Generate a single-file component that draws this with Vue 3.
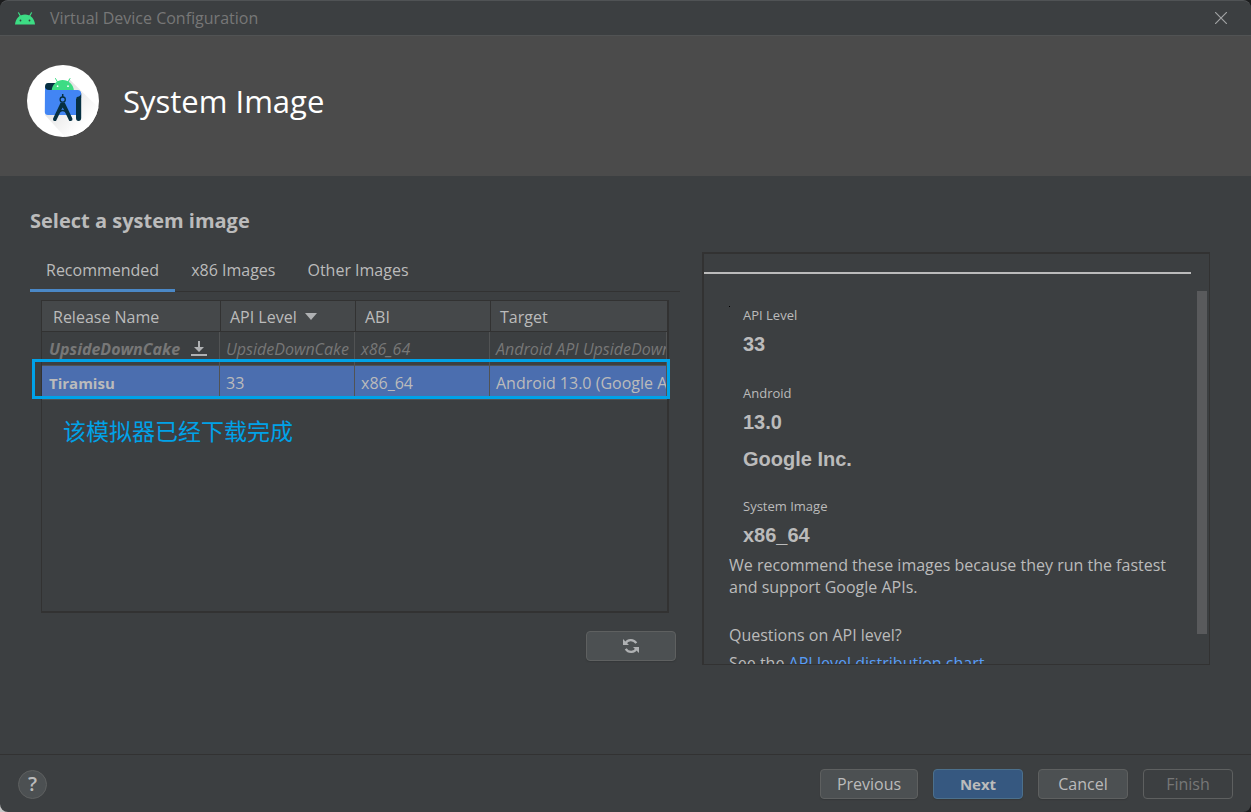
<script setup>
import { ref } from 'vue'

const tabs = ['Recommended', 'x86 Images', 'Other Images']
const activeTab = ref('Recommended')

const images = [
  { name: 'UpsideDownCake', api: 'UpsideDownCake', abi: 'x86_64', target: 'Android API UpsideDownCake', remote: true },
  { name: 'Tiramisu', api: '33', abi: 'x86_64', target: 'Android 13.0 (Google APIs)', remote: false }
]
const selected = ref('Tiramisu')
</script>

<template>
  <div class="window">
    <header class="titlebar">
      <svg class="droid" viewBox="0 0 20 13" aria-hidden="true">
        <path d="M3.500 .8l2 3.400M16.500 .8l-2 3.400" stroke="#3ddc84" stroke-width="1.200" stroke-linecap="round" />
        <path d="M0 12.500C.4 6.500 4.600 2.400 10 2.400s9.600 4.100 10 10.100z" fill="#3ddc84" />
        <circle cx="5.500" cy="8.500" r=".9" fill="#34423b" />
        <circle cx="14.500" cy="8.500" r=".9" fill="#34423b" />
      </svg>
      <span class="title">Virtual Device Configuration</span>
      <button class="close" type="button" aria-label="Close">
        <svg viewBox="0 0 12 12"><path d="M0 0l12 12M12 0L0 12" stroke="#a0a2a3" stroke-width="1.200" /></svg>
      </button>
    </header>

    <section class="banner">
      <svg class="logo" viewBox="0 0 72 72" aria-hidden="true">
        <defs>
          <clipPath id="disc"><circle cx="36" cy="36" r="36" /></clipPath>
          <linearGradient id="shade" x1="0" y1="0" x2="1" y2="1">
            <stop offset="0" stop-color="#d2d2d2" />
            <stop offset=".75" stop-color="#fff" />
          </linearGradient>
        </defs>
        <circle cx="36" cy="36" r="36" fill="#fff" />
        <path d="M42 14L72 43V72H38L18 50z" fill="url(#shade)" clip-path="url(#disc)" />
        <path d="M21 18H29V26H18V22Q18 18 21 18z" fill="#073042" />
        <path d="M28.500 13.500l2 3.500M43 13.500l-2 3.500" stroke="#3ddc84" stroke-width="1" stroke-linecap="round" />
        <path d="M24.500 26C25.300 19 30 15 35.700 15S46.300 19 47 26z" fill="#3ddc84" />
        <circle cx="30.600" cy="21.200" r=".9" fill="#fff" />
        <circle cx="41" cy="21.200" r=".9" fill="#fff" />
        <path d="M18 22Q18.500 25 22 25H50.500Q54.200 25 54.200 29V33H49V50H21Q17.800 50 17.800 47z" fill="#4285f4" />
        <path d="M49 34.500Q49 31.500 52 31.500Q54.200 31 54.200 28V53Q54.200 56 51.500 56Q49 56 49 53z" fill="#073042" />
        <circle cx="35.700" cy="34.600" r="2.600" fill="none" stroke="#073042" stroke-width="1.300" />
        <path d="M35.700 29v3" stroke="#073042" stroke-width="1.500" />
        <path d="M33.700 37.500h4L45.400 53.500Q46 55.500 44 56H42.300L36.800 44.500L35.700 42.500L34.600 44.500L29 56H27.300Q25.500 55.500 26.100 53.500z" fill="#073042" />
        <path d="M31.500 47.500Q35.700 43.500 40 47.500" fill="none" stroke="#073042" stroke-width="1.600" />
      </svg>
      <h1>System Image</h1>
    </section>

    <main>
      <h2>Select a system image</h2>
      <div class="columns">
        <div class="chooser">
          <div class="tabs" role="tablist">
            <button
              v-for="tab in tabs"
              :key="tab"
              type="button"
              role="tab"
              :aria-selected="tab === activeTab"
              :class="{ active: tab === activeTab }"
              @click="activeTab = tab"
            >{{ tab }}</button>
          </div>

          <div class="list">
            <table>
              <thead>
                <tr>
                  <th class="c-name">Release Name</th>
                  <th class="c-api">API Level <svg class="sort" viewBox="0 0 12 8"><path d="M0 0h12L6 7z" fill="#afb1b3" /></svg></th>
                  <th class="c-abi">ABI</th>
                  <th class="c-target">Target</th>
                </tr>
              </thead>
              <tbody>
                <tr
                  v-for="image in images"
                  :key="image.name"
                  :class="{ remote: image.remote, selected: image.name === selected }"
                  @click="selected = image.name"
                >
                  <td>
                    <div class="name">
                      <b>{{ image.name }}</b>
                      <button v-if="image.remote" type="button" aria-label="Download">
                        <svg viewBox="0 0 16 16"><path d="M7 0h2v6h4L8 11 3 6h4zM0 13h16v2H0z" fill="#afb1b3" /></svg>
                      </button>
                    </div>
                  </td>
                  <td>{{ image.api }}</td>
                  <td>{{ image.abi }}</td>
                  <td>{{ image.target }}</td>
                </tr>
              </tbody>
            </table>
            <div class="mark"></div>
            <p class="note" lang="zh-CN">该模拟器已经下载完成</p>
          </div>

          <button class="btn refresh" type="button" aria-label="Refresh">
            <svg viewBox="0 0 16 16" fill="none">
              <path d="M2.500 5.500C4.500 1.300 10.500.8 13.300 5.200M13.500 10.500C11.500 14.700 5.500 15.200 2.700 10.800" stroke="#afb1b3" stroke-width="2.200" />
              <path d="M0 1v6h6zM16 15V9h-6z" fill="#afb1b3" />
            </svg>
          </button>
        </div>

        <aside class="details">
          <div class="text">
            <hr>
            <dl>
              <dt>API Level</dt>
              <dd>33</dd>
              <dt>Android</dt>
              <dd>13.0</dd>
              <dd class="vendor">Google Inc.</dd>
              <dt>System Image</dt>
              <dd>x86_64</dd>
            </dl>
            <p>We recommend these images because they run the fastest and support Google APIs.</p>
            <p class="question">Questions on API level?</p>
            <p class="see">See the <a href="#">API level distribution chart</a></p>
          </div>
          <div class="track"><div class="thumb"></div></div>
        </aside>
      </div>
    </main>

    <footer>
      <button class="help" type="button" aria-label="Help">?</button>
      <div class="actions">
        <button class="btn previous" type="button">Previous</button>
        <button class="btn primary" type="button">Next</button>
        <button class="btn" type="button">Cancel</button>
        <button class="btn" type="button" disabled>Finish</button>
      </div>
    </footer>
  </div>
</template>

<style>
body {
  margin: 0;
  background: radial-gradient(circle at 0 100%, #c8c8c8 8px, #1b1c1d 9px);
}
</style>

<style scoped>
* { box-sizing: border-box; }
.window {
  height: 100vh;
  min-height: 600px;
  display: flex;
  flex-direction: column;
  overflow: hidden;
  border-radius: 8px;
  background: #3c3f41;
  color: #bbbbbb;
  font: 16px/22px "Open Sans", "Noto Sans", "Noto Sans CJK SC", sans-serif;
}
button { font: inherit; color: inherit; padding: 0; }
h1, h2, p, dl, dd { margin: 0; }
svg { display: block; }

.titlebar {
  height: 36px;
  flex: none;
  display: flex;
  align-items: center;
  padding: 0 24px 0 15px;
  border-top: 1px solid #505355;
  border-bottom: 1px solid #515354;
  border-radius: 8px 8px 0 0;
}
.droid { width: 20px; height: 13px; }
.title { margin-left: 15px; color: #777777; }
.close { margin-left: auto; border: 0; background: none; }
.close svg { width: 12px; height: 12px; }

.banner {
  height: 140px;
  flex: none;
  display: flex;
  align-items: center;
  gap: 24px;
  padding: 0 27px 10px;
  background: #4b4b4b;
}
.logo { width: 72px; height: 72px; }
h1 { font-size: 31px; line-height: 40px; font-weight: 400; color: #ffffff; }

main {
  flex: 1;
  min-height: 0;
  display: flex;
  flex-direction: column;
  padding: 30px 41px 89px 30px;
}
h2 { font-size: 20px; line-height: 30px; font-weight: 700; margin-bottom: 16px; }
.columns {
  flex: 1;
  min-height: 0;
  display: grid;
  grid-template-columns: 650fr 508fr;
  grid-template-rows: minmax(0, 1fr);
  gap: 22px;
}
.chooser { min-width: 0; display: flex; flex-direction: column; }
.tabs { display: flex; height: 40px; flex: none; border-bottom: 1px solid #323232; }
.tabs button {
  height: 40px;
  padding: 0 16px 1px;
  border: 0;
  border-bottom: 3px solid transparent;
  background: none;
}
.tabs .active { border-bottom-color: #4a88c7; }

.list {
  position: relative;
  flex: 1;
  margin: 8px 11px 18px;
  border: solid #323232;
  border-width: 1px 2px 2px 1px;
}
table { width: 100%; table-layout: fixed; border-collapse: separate; border-spacing: 0; }
.c-name { width: 178px; }
.c-api, .c-abi { width: 135px; }
th {
  height: 31px;
  padding: 2px 0 0 9px;
  border-left: 1px solid #323232;
  border-bottom: 1px solid #323232;
  background: #45484a;
  font-weight: 400;
  text-align: left;
}
th:first-child { padding-left: 11px; border-left: 0; }
.sort { display: inline-block; width: 12px; height: 8px; margin-left: 4px; vertical-align: 2px; }
td {
  height: 34px;
  padding: 1px 0 0 6px;
  border-right: 1px solid #515354;
  border-bottom: 1px solid #515354;
  overflow: hidden;
  white-space: nowrap;
}
td:first-child { padding-left: 7px; }
.remote { color: #777777; font-style: italic; }
.selected td { background: #4b6eaf; }
.name { display: flex; align-items: center; gap: 8px; }
.name b { overflow: hidden; font-size: 15px; }
.remote .name b { width: 134px; font-size: 16px; }
.name button { border: 0; background: none; }
.name svg { width: 16px; height: 16px; }
.mark {
  position: absolute;
  top: 58px;
  left: -10px;
  right: -3px;
  height: 40px;
  border: 3px solid #00a2e8;
  pointer-events: none;
}
.note {
  position: absolute;
  top: 112px;
  left: 21px;
  color: #00a2e8;
  font: 23px/34px "Noto Sans CJK SC", sans-serif;
}

.btn {
  min-width: 90px;
  height: 30px;
  border: 1px solid #5e6060;
  border-radius: 4px;
  background: #4c5052;
  box-shadow: 0 1px 1px #35383a;
}
.refresh { align-self: flex-end; display: flex; align-items: center; justify-content: center; margin: 0 4px 4px 0; }
.refresh svg { width: 16px; height: 16px; }

.details {
  min-width: 0;
  display: flex;
  overflow: hidden;
  border: solid #323232;
  border-width: 2px 1px 1px 2px;
}
.text { flex: 1; min-width: 0; }
hr { height: 2px; margin: 18px 0 31px; border: 0; background: #bbbbbb; }
dl {
  padding-left: 39px;
  background: linear-gradient(#000000, #000000) 25px 1px / 1px 1px no-repeat;
}
dt { font-size: 13px; line-height: 20px; margin-top: 27px; }
dt:first-child { margin-top: 0; }
.vendor + dt { margin-top: 25px; }
dd {
  margin-top: 7px;
  font: bold 20px/24px "Liberation Sans", Arial, sans-serif;
}
.vendor { margin-top: 13px; }
.text p { padding: 0 20px 0 25px; }
dl + p { margin-top: 7px; }
.text .question { margin-top: 26px; }
.text .see { margin-top: 6px; }
a { color: #589df6; text-decoration: none; }
.track { width: 18px; padding: 37px 2px 30px 6px; }
.thumb { height: 100%; background: #595a5c; }

footer {
  height: 58px;
  flex: none;
  display: flex;
  align-items: center;
  justify-content: space-between;
  padding: 1px 18px 0;
  border-top: 1px solid #323232;
}
.help {
  width: 29px;
  height: 29px;
  border: 1px solid #5e6060;
  border-radius: 50%;
  background: #4c5052;
  font-size: 20px;
  font-weight: 600;
}
.actions { display: flex; gap: 15px; }
.previous { min-width: 98px; }
.primary { background: #365880; border-color: #4c708c; font-size: 15px; font-weight: 700; }
.btn:disabled { background: none; color: #777777; box-shadow: none; }
</style>
